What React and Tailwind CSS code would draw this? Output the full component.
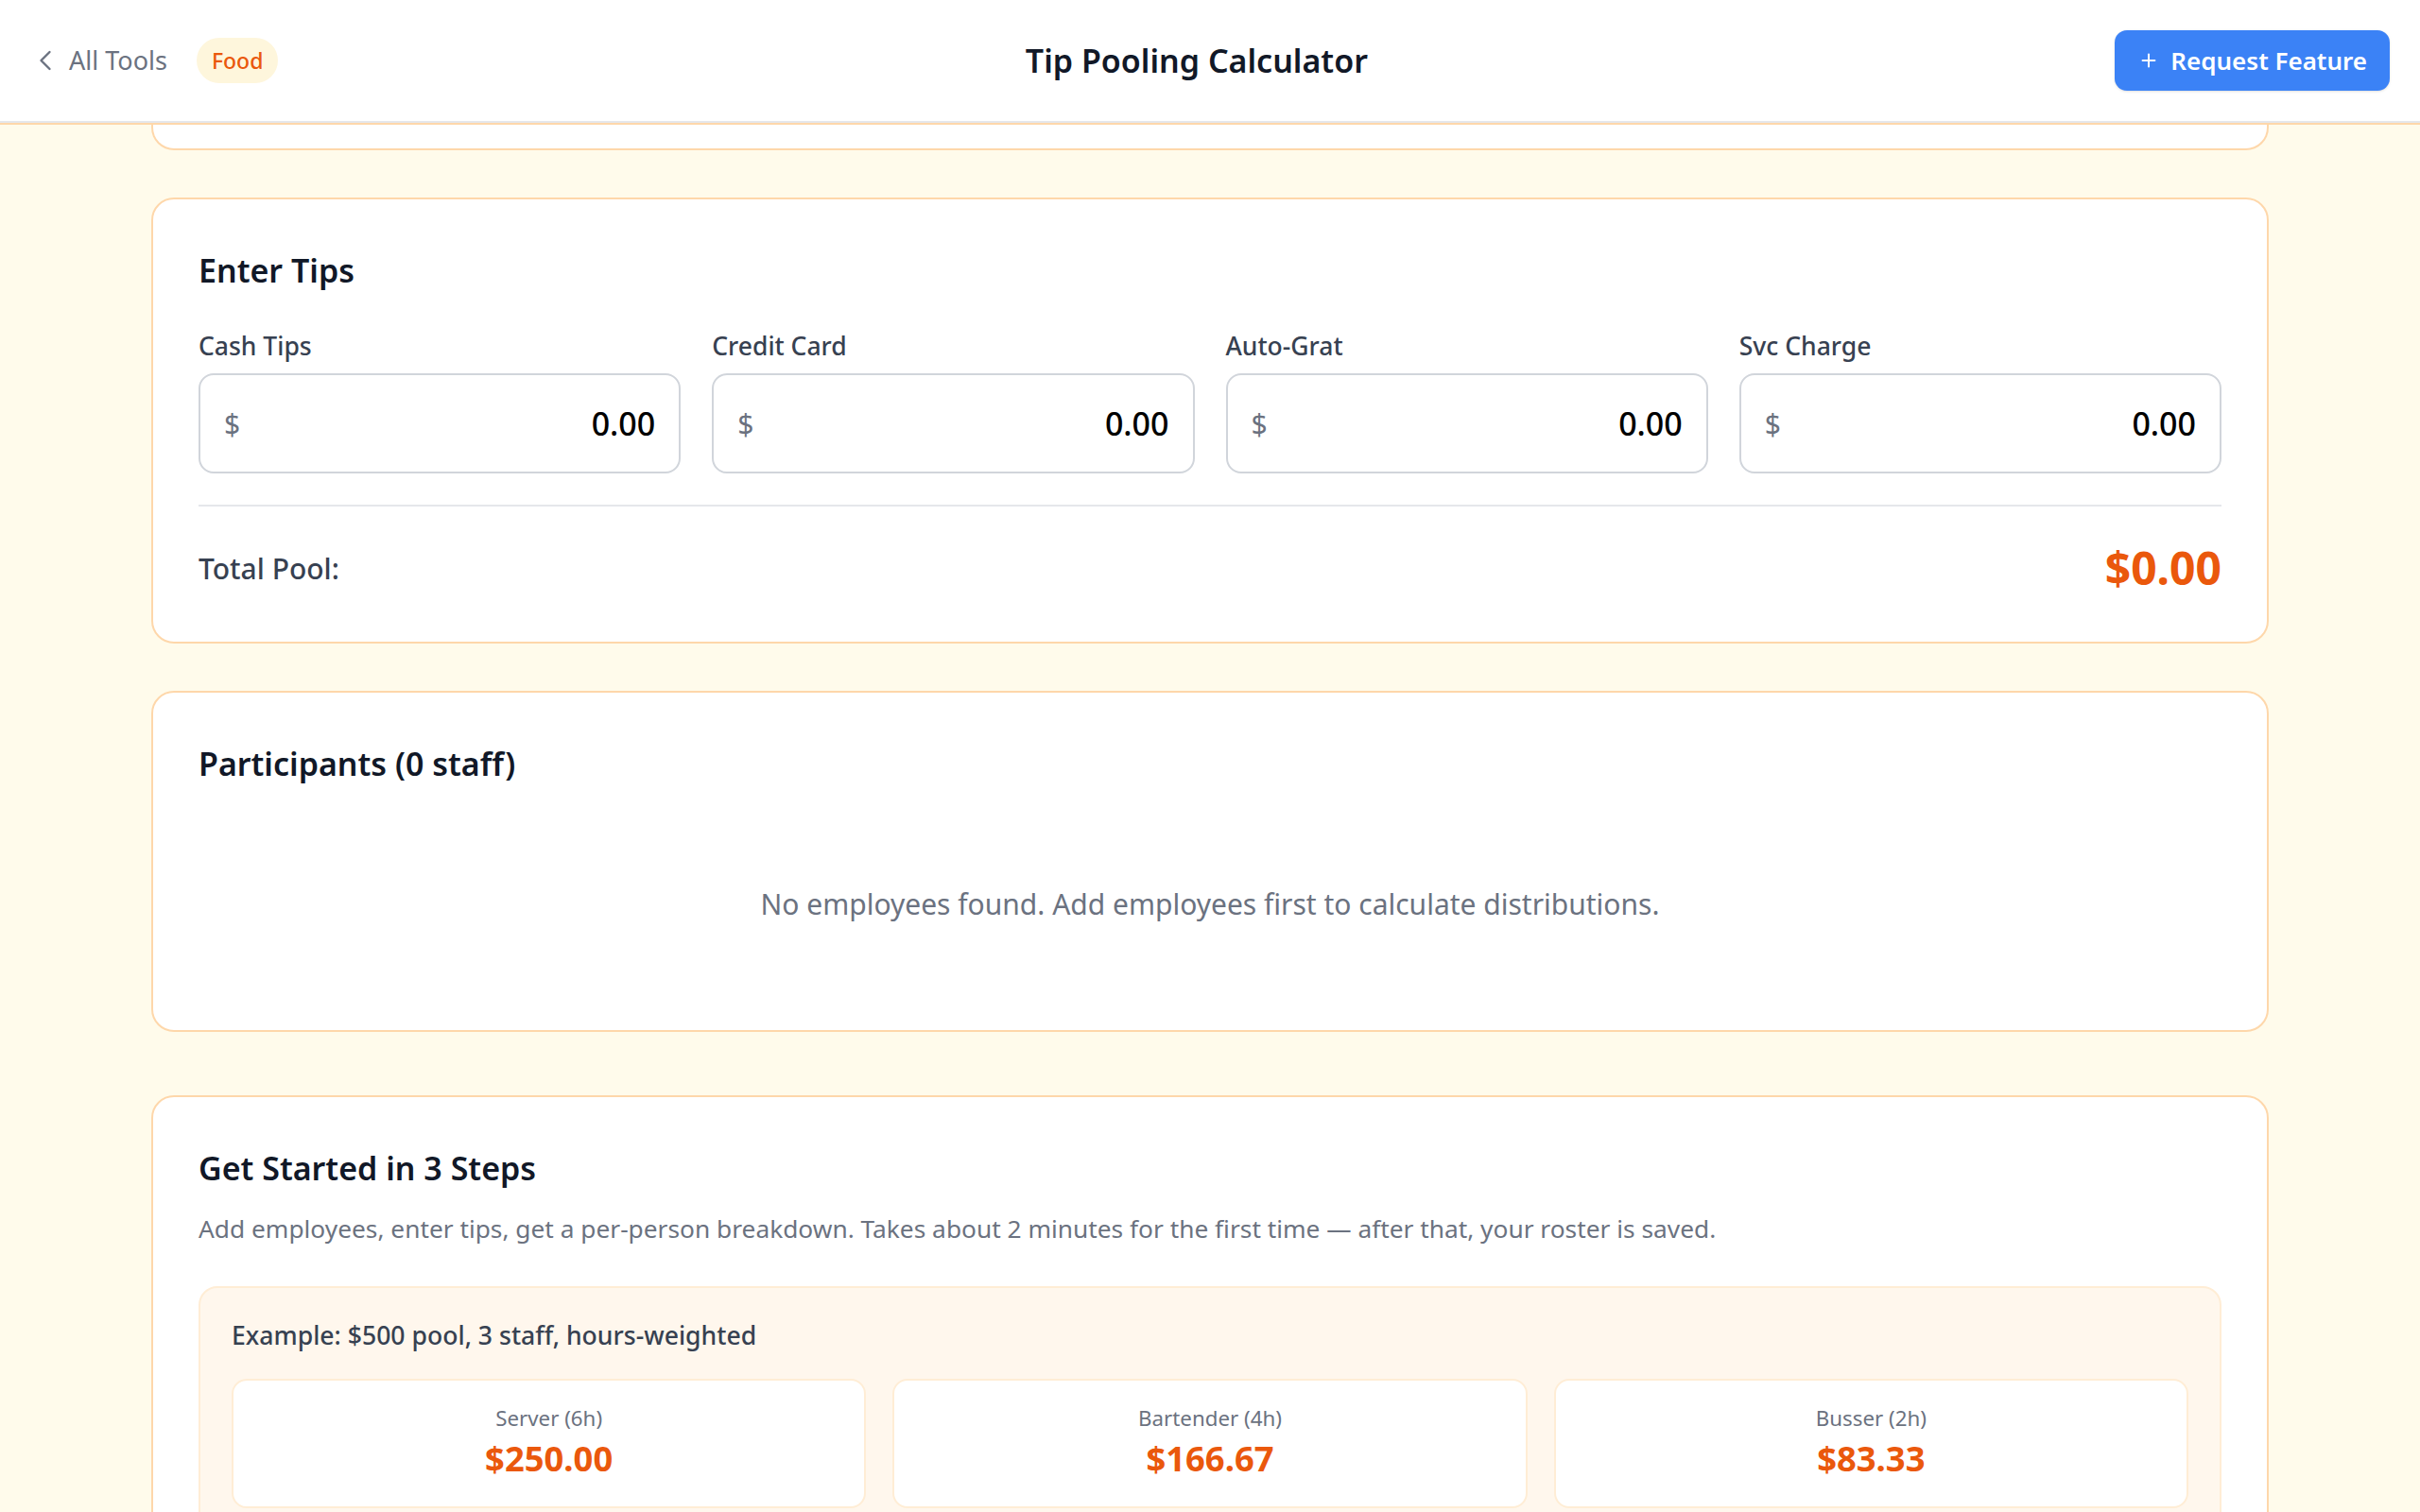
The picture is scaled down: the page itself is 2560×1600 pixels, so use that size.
import React from 'react';
import { ChevronLeft, Plus } from 'lucide-react';

const tipFields = ['Cash Tips', 'Credit Card', 'Auto-Grat', 'Svc Charge'];

const examples = [
  { role: 'Server (6h)', amount: '$250.00' },
  { role: 'Bartender (4h)', amount: '$166.67' },
  { role: 'Busser (2h)', amount: '$83.33' },
];

const Card = ({ className = '', children }) => (
  <div className={`bg-white border-2 border-[#fed7aa] rounded-[24px] px-[48px] pt-[48px] pb-[48px] ${className}`}>
    {children}
  </div>
);

const MoneyInput = ({ label }) => (
  <div>
    <label className="block text-[26.5px] leading-[40px] font-medium text-[#374151]">{label}</label>
    <div className="mt-[9px] h-[106px] border-2 border-[#d1d5db] rounded-[16px] flex items-center justify-between pl-[25px] pr-[25px]">
      <span className="text-[30px] text-[#6b7280]">$</span>
      <span className="text-[34px] font-medium text-black">0.00</span>
    </div>
  </div>
);

export default function App() {
  return (
    <div className="min-h-screen bg-[#fffbeb] font-['Noto_Sans',sans-serif]">
      {/* Header */}
      <header className="bg-white border-b-2 border-[#e5e7eb]">
        <div className="h-[128px] flex items-center justify-between pl-[30px] pr-[32px]">
          <div className="flex items-center">
            <ChevronLeft size={36} strokeWidth={1.6} className="text-[#6b7280]" />
            <span className="ml-[7px] text-[27px] text-[#6b7280]">All Tools</span>
            <span className="ml-[31px] h-[48px] px-[16px] flex items-center rounded-full bg-[#fef6dc] text-[#ea580c] text-[23px] font-medium">
              Food
            </span>
          </div>
          <h1 className="text-[34px] font-semibold text-[#111827]">Tip Pooling Calculator</h1>
          <button className="h-[64px] pl-[25px] pr-[24px] flex items-center gap-[12px] rounded-[13px] bg-[#3b82f6] text-white text-[26px] font-semibold shadow-sm">
            <Plus size={22} strokeWidth={2.2} />
            Request Feature
          </button>
        </div>
      </header>
      <div className="h-[2px] bg-[#fed7aa]" />

      <main className="w-[2240px] mx-auto pb-[120px]">
        {/* previous card, scrolled under header */}
        <div className="h-[27px] bg-white border-2 border-t-0 border-[#fed7aa] rounded-b-[24px]" />

        {/* Enter Tips */}
        <Card className="mt-[50px]">
          <h2 className="text-[34px] leading-[54px] font-semibold text-[#111827]">Enter Tips</h2>
          <div className="mt-[33px] grid grid-cols-4 gap-[33px]">
            {tipFields.map((f) => (
              <MoneyInput key={f} label={f} />
            ))}
          </div>
          <div className="mt-[33px] border-t-2 border-[#e5e7eb] pt-[35px] flex items-center justify-between">
            <span className="text-[30px] font-medium text-[#374151]">Total Pool:</span>
            <span className="text-[48px] leading-[60px] font-bold text-[#ea580c]">$0.00</span>
          </div>
        </Card>

        {/* Participants */}
        <Card className="mt-[50px]">
          <h2 className="text-[34px] leading-[54px] font-semibold text-[#111827]">Participants (0 staff)</h2>
          <div className="pt-[100px] pb-[63px] text-center">
            <p className="text-[30px] leading-[44px] text-[#6b7280]">
              No employees found. Add employees first to calculate distributions.
            </p>
          </div>
        </Card>

        {/* Get started */}
        <Card className="mt-[67px]">
          <h2 className="text-[34px] leading-[54px] font-semibold text-[#111827]">Get Started in 3 Steps</h2>
          <p className="mt-[18px] text-[26.3px] leading-[38px] text-[#6b7280]">
            Add employees, enter tips, get a per-person breakdown. Takes about 2 minutes for the first time — after that, your roster is saved.
          </p>
          <div className="mt-[42px] bg-[#fff7ed] border-2 border-[#ffedd5] rounded-[20px] px-[33px] pt-[31px] pb-[33px]">
            <p className="text-[26.6px] leading-[38px] font-medium text-[#374151]">
              Example: $500 pool, 3 staff, hours-weighted
            </p>
            <div className="mt-[27px] grid grid-cols-3 gap-[28px]">
              {examples.map((e) => (
                <div key={e.role} className="bg-white border-2 border-[#ffedd5] rounded-[16px] pt-[25px] pb-[29px] text-center">
                  <div className="text-[22.3px] leading-[30px] text-[#6b7280]">{e.role}</div>
                  <div className="mt-[5px] text-[36.4px] leading-[44px] font-bold text-[#ea580c]">{e.amount}</div>
                </div>
              ))}
            </div>
          </div>
          <div className="mt-[48px] h-[200px]" />
        </Card>
      </main>
    </div>
  );
}
